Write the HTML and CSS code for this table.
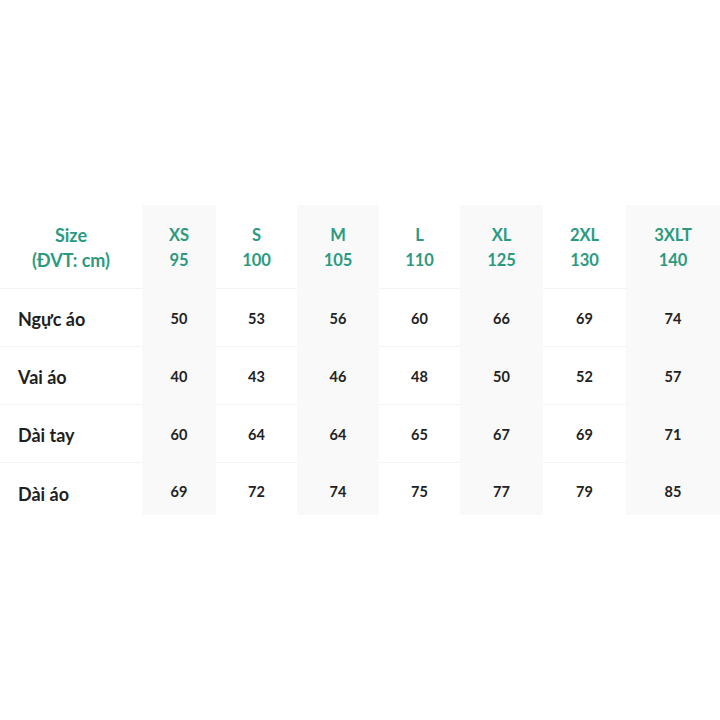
FILE: index.html
```html
<!DOCTYPE html>
<html lang="vi">
<head>
<meta charset="utf-8">
<link rel="stylesheet" href="styles.css">
</head>
<body>
<div class="page">
  <div class="chart">
    <div class="cell head first">Size<br>(ĐVT: cm)</div>
    <div class="cell head shade">XS<br>95</div>
    <div class="cell head">S<br>100</div>
    <div class="cell head shade">M<br>105</div>
    <div class="cell head">L<br>110</div>
    <div class="cell head shade">XL<br>125</div>
    <div class="cell head">2XL<br>130</div>
    <div class="cell head shade">3XLT<br>140</div>

    <div class="cell label">Ngực áo</div>
    <div class="cell num shade">50</div>
    <div class="cell num">53</div>
    <div class="cell num shade">56</div>
    <div class="cell num">60</div>
    <div class="cell num shade">66</div>
    <div class="cell num">69</div>
    <div class="cell num shade">74</div>

    <div class="cell label">Vai áo</div>
    <div class="cell num shade">40</div>
    <div class="cell num">43</div>
    <div class="cell num shade">46</div>
    <div class="cell num">48</div>
    <div class="cell num shade">50</div>
    <div class="cell num">52</div>
    <div class="cell num shade">57</div>

    <div class="cell label">Dài tay</div>
    <div class="cell num shade">60</div>
    <div class="cell num">64</div>
    <div class="cell num shade">64</div>
    <div class="cell num">65</div>
    <div class="cell num shade">67</div>
    <div class="cell num">69</div>
    <div class="cell num shade">71</div>

    <div class="cell label last">Dài áo</div>
    <div class="cell num shade last">69</div>
    <div class="cell num last">72</div>
    <div class="cell num shade last">74</div>
    <div class="cell num last">75</div>
    <div class="cell num shade last">77</div>
    <div class="cell num last">79</div>
    <div class="cell num shade last">85</div>
  </div>
</div>
</body>
</html>
```
FILE: styles.css
```css
html, body {
  margin: 0;
  padding: 0;
  background: #ffffff;
}
.page {
  width: 720px;
  height: 720px;
  padding-top: 205px;
  box-sizing: border-box;
  font-family: Lato, "Open Sans", sans-serif;
}
.chart {
  display: grid;
  grid-template-columns: 142px 74px 81px 82px 81px 83px 83px 94px;
  grid-template-rows: 84px 58px 58px 58px 52px;
}
.cell {
  display: flex;
  align-items: center;
  justify-content: center;
  text-align: center;
  border-bottom: 1px solid #f3f3f3;
  box-sizing: border-box;
}
.cell.last {
  border-bottom: none;
  align-items: flex-start;
  padding-top: 20px;
}
.shade {
  background: #f9f9f9;
  border-bottom-color: #f9f9f9;
}
.head {
  color: #2b9a7f;
  font-weight: 700;
  font-size: 16.5px;
  line-height: 25px;
  padding-top: 2px;
}
.head.first {
  font-size: 18px;
}
.label {
  justify-content: flex-start;
  padding-left: 18px;
  padding-top: 2px;
  font-weight: 700;
  font-size: 18px;
  color: #1f1f1f;
}
.num {
  font-weight: 700;
  font-size: 14.5px;
  color: #222222;
  padding-top: 2px;
}
```
